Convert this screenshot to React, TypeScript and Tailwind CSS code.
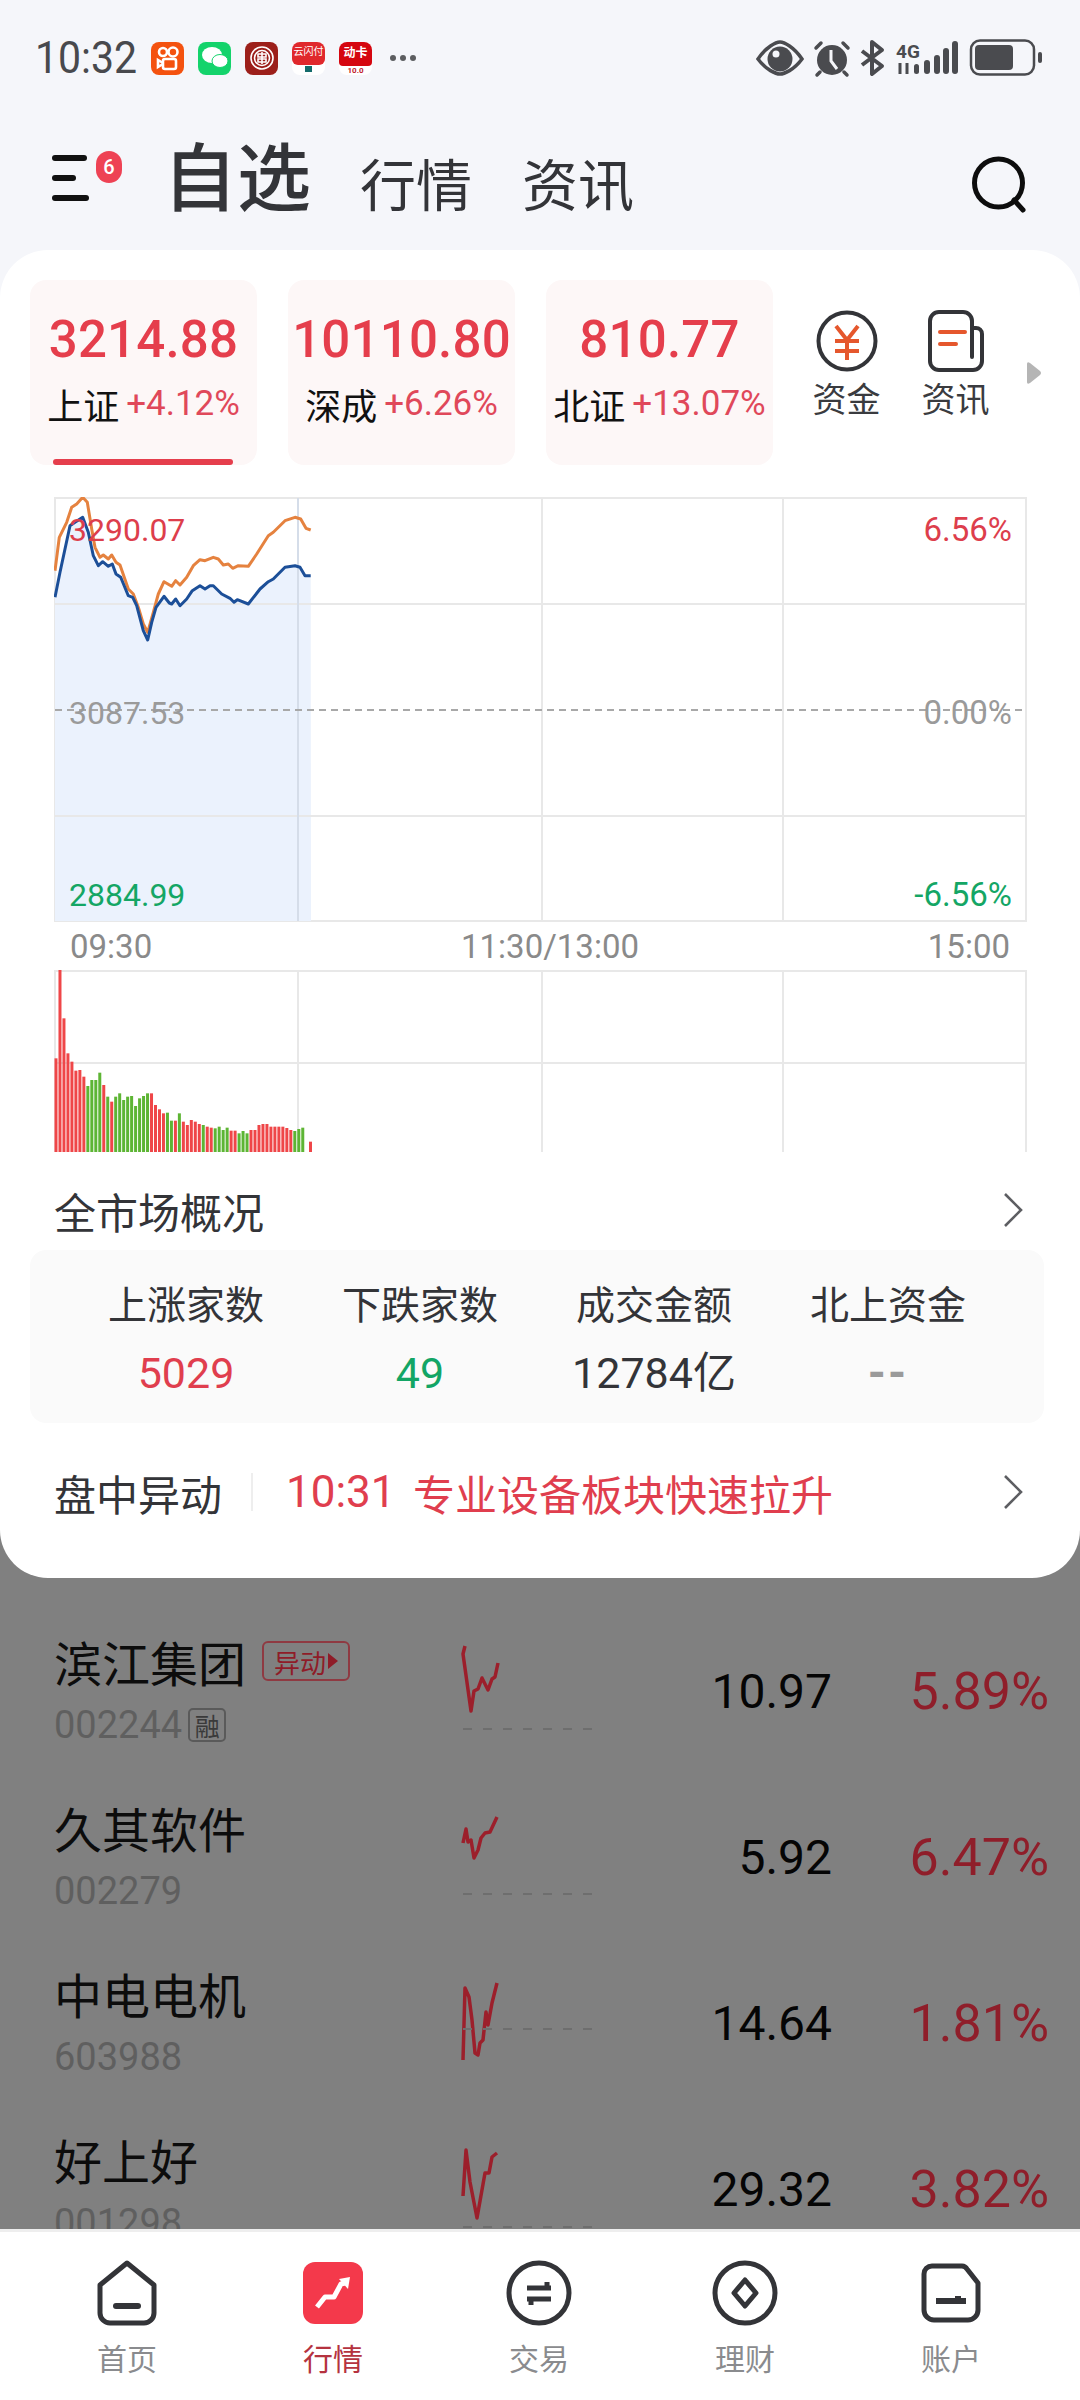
import React from 'react';

const NUM = "font-['Roboto','Noto_Sans_CJK_SC',sans-serif]";

const blue: [number, number][] = [[75,355],[90,280],[120,140],[135,130],[158,115],[175,160],[190,230],[205,260],[218,248],[235,262],[247,255],[258,285],[272,295],[295,350],[308,355],[320,380],[340,455],[353,483],[365,430],[378,385],[402,352],[418,372],[425,375],[437,360],[450,380],[470,360],[487,335],[510,320],[525,330],[540,320],[550,320],[575,345],[600,358],[612,370],[622,362],[655,375],[690,330],[715,308],[730,300],[765,265],[795,260],[810,265],[825,290],[842,290]];
const orange: [number, number][] = [[75,275],[88,175],[110,130],[125,85],[140,75],[158,55],[172,70],[185,150],[195,205],[210,235],[220,228],[235,240],[245,228],[258,250],[270,258],[295,330],[310,345],[325,385],[340,435],[353,460],[370,400],[385,345],[402,308],[425,322],[437,305],[450,318],[470,295],[490,260],[510,242],[525,245],[550,235],[565,240],[580,258],[595,255],[608,268],[625,260],[655,262],[680,225],[715,170],[730,160],[765,125],[795,115],[812,120],[828,148],[842,153]];

const toChart = (p: [number, number][]) =>
  p.map(([x, y]) => `${(x / 3 - 24).toFixed(1)},${(y / 3 - 18).toFixed(1)}`).join(' ');

const bars: [number, string][] = [[325,'r'],[60,'r'],[205,'r'],[310,'r'],[335,'r'],[362,'r'],[360,'r'],[380,'r'],[408,'g'],[390,'g'],[390,'g'],[368,'g'],[405,'r'],[440,'g'],[455,'r'],[440,'g'],[430,'g'],[450,'g'],[440,'g'],[438,'g'],[468,'g'],[445,'g'],[438,'g'],[430,'g'],[430,'r'],[465,'r'],[478,'r'],[490,'r'],[488,'g'],[512,'g'],[512,'r'],[490,'g'],[515,'r'],[525,'r'],[510,'r'],[515,'r'],[522,'r'],[525,'g'],[530,'r'],[533,'r'],[535,'g'],[530,'g'],[540,'g'],[533,'g'],[542,'r'],[542,'r'],[550,'g'],[543,'g'],[550,'g'],[540,'r'],[540,'r'],[525,'r'],[522,'r'],[522,'r'],[530,'r'],[530,'r'],[530,'r'],[530,'r'],[534,'r'],[540,'r'],[543,'g'],[537,'g'],[533,'g'],[575,'r']];

const stocks = [
  { name: '滨江集团', code: '002244', price: '10.97', pct: '5.89%', tag: true, rong: true, dashY: 91, line: '24,8 22,16 30,73 33,53 37,51 41,40 47,52 51,41 54,39 57,25' },
  { name: '久其软件', code: '002279', price: '5.92', pct: '6.47%', tag: false, rong: false, dashY: 90, line: '22,39 25,25 27,38 30,36 33,54 37,46 40,34 44,29 49,28 56,13' },
  { name: '中电电机', code: '603988', price: '14.64', pct: '1.81%', tag: false, rong: false, dashY: 59, line: '22,90 24,18 28,27 31,50 34,83 37,85 39,73 42,70 45,42 47,55 51,33 56,13' },
  { name: '好上好', code: '001298', price: '29.32', pct: '3.82%', tag: false, rong: false, dashY: 91, line: '22,60 25,14 29,46 36,82 44,37 48,37 51,21 56,17' },
];

const Chevron = ({ className }: { className?: string }) => (
  <svg width="22" height="36" viewBox="0 0 22 36" fill="none" stroke="#5d5e62" strokeWidth="2.6" className={className}>
    <path d="M3 2 19 18 3 34" />
  </svg>
);

const Spark = ({ line, dashY }: { line: string; dashY: number }) => (
  <svg width="160" height="100" viewBox="0 0 160 100" className="shrink-0">
    <polyline points={line} fill="none" stroke="#9c1f2b" strokeWidth="3.5" strokeLinejoin="round" />
    <line x1="22" y1={dashY} x2="152" y2={dashY} stroke="#6e6e6e" strokeWidth="2" strokeDasharray="9 11" />
  </svg>
);

const AppDot = ({ className, children }: { className: string; children?: React.ReactNode }) => (
  <div className={`w-[33px] h-[33px] rounded-[8px] flex items-center justify-center overflow-hidden ${className}`}>
    {children}
  </div>
);

const StatusBar = () => (
  <div className="h-[76px] pt-[40px] pl-[35px] pr-[34px] flex items-center justify-between text-[#48494d]">
    <div className="flex items-center">
      <span className={`${NUM} text-[41px] leading-none w-[116px] scale-y-110`}>10:32</span>
      <div className="flex items-center gap-[14px]">
        <AppDot className="bg-[#f4520f]">
          <svg width="24" height="26" viewBox="0 0 24 26" fill="none" stroke="#fff" strokeWidth="2.6">
            <circle cx="7" cy="7" r="4" />
            <circle cx="17" cy="7" r="4.5" />
            <rect x="7" y="14" width="13" height="10" rx="2" />
            <path d="M7 18 2 15v7l5-3" />
          </svg>
        </AppDot>
        <AppDot className="bg-[#14d36b]">
          <svg width="26" height="22" viewBox="0 0 26 22" fill="#fff">
            <ellipse cx="10" cy="8" rx="10" ry="8" />
            <ellipse cx="18" cy="14" rx="8" ry="6.5" stroke="#14d36b" strokeWidth="1" />
          </svg>
        </AppDot>
        <AppDot className="bg-[#9c1f1a]">
          <svg width="26" height="26" viewBox="0 0 26 26" fill="none" stroke="#fff" strokeWidth="1.6">
            <circle cx="13" cy="13" r="11" />
            <circle cx="13" cy="13" r="7.5" />
            <path d="M9 9h8v3H9zM9 14h8v3H9zM13 7v12" />
          </svg>
        </AppDot>
        <AppDot className="bg-white flex-col justify-start">
          <div className="w-full h-[23px] bg-[#e0282c] rounded-b-[6px] text-white text-[10px] leading-[18px] text-center font-['Noto_Sans_CJK_SC',sans-serif]">云闪付</div>
          <div className="w-[7px] h-[6px] mt-[1px] bg-[#136b6b]" />
        </AppDot>
        <AppDot className="bg-white flex-col justify-start">
          <div className="w-full h-[24px] bg-[#d5060f] rounded-b-[4px] text-white text-[12px] leading-[20px] font-bold text-center font-['Noto_Sans_CJK_SC',sans-serif]">动卡</div>
          <div className={`${NUM} text-[#c0202a] text-[8px] leading-[9px] font-bold`}>10.0</div>
        </AppDot>
      </div>
      <div className="flex gap-[4px] ml-[18px]">
        <span className="w-[6px] h-[6px] rounded-full bg-[#5c5d60]" />
        <span className="w-[6px] h-[6px] rounded-full bg-[#5c5d60]" />
        <span className="w-[6px] h-[6px] rounded-full bg-[#5c5d60]" />
      </div>
    </div>
    <svg width="290" height="38" viewBox="0 0 290 38" fill="#4a4b4f" className="overflow-visible">
      {/* eye */}
      <path d="M2 20C10 8 20 3 24 3s14 5 22 17c-8 11-18 15-22 15S10 31 2 20Z" fill="none" stroke="#4a4b4f" strokeWidth="3.5" />
      <circle cx="24" cy="20" r="12.5" />
      <circle cx="20" cy="15" r="3.5" fill="#f5f6fa" />
      {/* alarm */}
      <circle cx="76" cy="21" r="15" />
      <path d="M75 11v11l6 8" fill="none" stroke="#f5f6fa" strokeWidth="3" />
      <path d="M60 9l5-5M92 9l-5-5M64 33l-3 3M88 33l3 3" stroke="#4a4b4f" strokeWidth="3.5" strokeLinecap="round" />
      {/* bluetooth */}
      <path d="M106 12 126 27 116 35V3l10 8-20 15" fill="none" stroke="#4a4b4f" strokeWidth="4" strokeLinejoin="round" />
      {/* 4G and signal */}
      <text x="140" y="19" fontSize="19" fontWeight="700" fontFamily="Roboto, sans-serif">4G</text>
      <path d="M144 24v11M151 24v11" stroke="#4a4b4f" strokeWidth="3" />
      <rect x="158" y="25" width="5" height="10" rx="2.5" />
      <rect x="168" y="21" width="6" height="14" rx="3" />
      <rect x="178" y="16" width="6" height="19" rx="3" />
      <rect x="187" y="9" width="6" height="26" rx="3" />
      <rect x="196" y="2" width="6" height="33" rx="3" />
      {/* battery */}
      <rect x="215" y="1.5" width="63" height="34" rx="9" fill="none" stroke="#4a4b4f" strokeWidth="2.5" />
      <rect x="219" y="6" width="38" height="25" rx="4" />
      <rect x="282" y="13" width="4" height="11" rx="2" />
    </svg>
  </div>
);

const Header = () => (
  <div className="h-[174px] pl-[52px] pr-[52px] pt-[30px] flex items-center justify-between">
    <div className="flex items-center font-['Noto_Sans_CJK_SC',sans-serif] text-[#333438]">
      <div className="relative w-[111px] h-[50px]">
        <div className="flex flex-col justify-between h-[46px] mt-[2px]">
          <div className="w-[35px] h-[6px] rounded-full bg-[#111]" />
          <div className="w-[24px] h-[6px] rounded-full bg-[#111]" />
          <div className="w-[37px] h-[6px] rounded-full bg-[#111]" />
        </div>
        <span className={`${NUM} absolute left-[44px] -top-[2px] w-[26px] h-[32px] rounded-full bg-[#ee4254] text-white text-[20px] leading-[32px] text-center font-medium`}>6</span>
      </div>
      <span className="text-[74px] leading-none font-medium w-[197px] -mt-[10px]">自选</span>
      <span className="text-[56px] leading-none w-[162px] mt-[8px]">行情</span>
      <span className="text-[56px] leading-none mt-[8px]">资讯</span>
    </div>
    <svg width="56" height="58" viewBox="0 0 56 58" fill="none" stroke="#0d0d0d" strokeWidth="5" className="mt-[14px]">
      <circle cx="26.5" cy="27" r="24" />
      <path d="M42 44l9 10" strokeLinecap="round" />
    </svg>
  </div>
);

const IndexCard = ({ value, name, pct, active }: { value: string; name: string; pct: string; active?: boolean }) => (
  <div className="relative w-[227px] h-[185px] rounded-[16px] bg-[#fdf7f7] flex flex-col items-center pt-[30px]">
    <span className={`${NUM} text-[51px] leading-[60px] font-medium text-[#e53e4c] tracking-[0.2px]`}>{value}</span>
    <div className="flex items-center mt-[12px] whitespace-nowrap">
      <span className="font-['Noto_Sans_CJK_SC',sans-serif] text-[36px] leading-[44px] text-[#111]">{name}</span>
      <span className={`${NUM} text-[35px] leading-[44px] ml-[7px] text-[#e0485a]`}>{pct}</span>
    </div>
    {active && <div className="absolute left-[23px] bottom-0 w-[180px] h-[6px] rounded-full bg-[#e53e4c]" />}
  </div>
);

const TopIcon = ({ label, children }: { label: string; children: React.ReactNode }) => (
  <div className="w-[109px] flex flex-col items-center">
    {children}
    <span className="font-['Noto_Sans_CJK_SC',sans-serif] text-[34px] leading-[40px] mt-[6px] text-[#3a3b3f]">{label}</span>
  </div>
);

const Indices = () => (
  <div className="flex items-start pl-[30px] pt-[30px]">
    <div className="flex gap-[31px]">
      <IndexCard value="3214.88" name="上证" pct="+4.12%" active />
      <IndexCard value="10110.80" name="深成" pct="+6.26%" />
      <IndexCard value="810.77" name="北证" pct="+13.07%" />
    </div>
    <div className="flex ml-[19px] pt-[30px]">
      <TopIcon label="资金">
        <svg width="62" height="62" viewBox="0 0 62 62" fill="none">
          <circle cx="31" cy="31" r="28.5" stroke="#333438" strokeWidth="4" />
          <path d="M20 16l11 14 11-14M19 31h24M19 41h24M31 30v20" stroke="#e5572d" strokeWidth="4" />
        </svg>
      </TopIcon>
      <TopIcon label="资讯">
        <svg width="56" height="62" viewBox="0 0 56 62" fill="none">
          <path d="M44 18h4a6 6 0 0 1 6 6v27a9 9 0 0 1-9 9H11a9 9 0 0 1-9-9V11a9 9 0 0 1 9-9h24a9 9 0 0 1 9 9v36" stroke="#333438" strokeWidth="4" strokeLinecap="round" />
          <path d="M12 22h25M12 34h16" stroke="#e5572d" strokeWidth="4" strokeLinecap="round" />
        </svg>
      </TopIcon>
    </div>
    <svg width="16" height="24" viewBox="0 0 16 24" className="ml-[16px] mt-[81px]">
      <path d="M1 3q0-3 3-1l10 8q2 2 0 4L4 22q-3 2-3-1Z" fill="#b5b5b5" />
    </svg>
  </div>
);

const MainChart = () => (
  <div className="relative mx-[54px] mt-[32px] w-[973px] h-[425px]">
    <svg width="973" height="425" viewBox="0 0 973 425" className="block">
      <rect x="1" y="1" width="971" height="423" fill="#fff" stroke="#e8e8e8" strokeWidth="2" />
      <polygon points={`${toChart(blue)} 257,424 1,424`} fill="#ebf2fd" />
      <path d="M244 1v423M488 1v423M729 1v423M1 107h971M1 319h971" stroke="#e8e8e8" strokeWidth="2" fill="none" />
      <path d="M244 1v423" stroke="#d5dde9" strokeWidth="2" fill="none" />
      <line x1="1" y1="213" x2="972" y2="213" stroke="#a8a8a8" strokeWidth="2" strokeDasharray="7 5" />
      <polyline points={toChart(orange)} fill="none" stroke="#e5823f" strokeWidth="3" strokeLinejoin="round" />
      <polyline points={toChart(blue)} fill="none" stroke="#1c4f98" strokeWidth="3" strokeLinejoin="round" />
    </svg>
    <span className={`${NUM} absolute left-[15px] top-[13px] text-[32px] leading-[40px] text-[#dd3e4c]`}>3290.07</span>
    <span className={`${NUM} absolute right-[15px] top-[13px] text-[33px] leading-[40px] text-[#dd3e4c]`}>6.56%</span>
    <span className={`${NUM} absolute left-[15px] top-[196px] text-[32px] leading-[40px] text-[#9a9a9a]`}>3087.53</span>
    <span className={`${NUM} absolute right-[15px] top-[196px] text-[33px] leading-[40px] text-[#9a9a9a]`}>0.00%</span>
    <span className={`${NUM} absolute left-[15px] bottom-[7px] text-[32px] leading-[40px] text-[#14a665]`}>2884.99</span>
    <span className={`${NUM} absolute right-[15px] bottom-[7px] text-[33px] leading-[40px] text-[#14a665]`}>-6.56%</span>
  </div>
);

const TimeAxis = () => (
  <div className={`${NUM} mx-[54px] px-[16px] pt-[2px] h-[48px] flex items-center justify-between text-[33px] text-[#8a8a8a]`}>
    <span>09:30</span>
    <span className="ml-[20px]">11:30/13:00</span>
    <span>15:00</span>
  </div>
);

const VolumeChart = () => (
  <svg width="973" height="182" viewBox="0 0 973 182" className="block ml-[54px]">
    <path d="M1 182V1h971v181M244 1v181M488 1v181M729 1v181M1 93h971" stroke="#e8e8e8" strokeWidth="2" fill="none" />
    {bars.map(([top, c], i) => {
      const x = i === bars.length - 1 ? 255 : 0.5 + i * 3.98;
      const y = top / 3 - 20;
      return <rect key={i} x={x} y={y} width="3" height={182 - y} fill={c === 'r' ? '#ef4648' : '#5db534'} />;
    })}
  </svg>
);

const Overview = () => {
  const cells = [
    { label: '上涨家数', value: '5029', color: 'text-[#e03e4e]' },
    { label: '下跌家数', value: '49', color: 'text-[#12a565]' },
    { label: '成交金额', value: '12784亿', color: 'text-[#333438]' },
  ];
  return (
    <div className="font-['Noto_Sans_CJK_SC',sans-serif]">
      <div className="h-[98px] pt-[18px] pl-[54px] pr-[56px] flex items-center justify-between">
        <span className="text-[42px] text-[#333438]">全市场概况</span>
        <Chevron />
      </div>
      <div className="ml-[30px] mr-[36px] h-[173px] rounded-[16px] bg-[#fafafa] grid grid-cols-4 px-[39px] pt-[26px]">
        {cells.map((c) => (
          <div key={c.label} className="flex flex-col items-center">
            <span className="text-[39px] leading-[52px] text-[#333438]">{c.label}</span>
            <span className={`${NUM} text-[43px] leading-[52px] mt-[19px] ${c.color}`}>{c.value}</span>
          </div>
        ))}
        <div className="flex flex-col items-center">
          <span className="text-[39px] leading-[52px] text-[#333438]">北上资金</span>
          <span className={`${NUM} text-[46px] leading-[52px] mt-[19px] font-bold tracking-[2px] text-[#9a9a9a]`}>--</span>
        </div>
      </div>
      <div className="h-[138px] pl-[54px] pr-[56px] flex items-center">
        <span className="text-[42px] text-[#333438] w-[197px]">盘中异动</span>
        <div className="w-[2px] h-[38px] bg-[#eeeeee]" />
        <span className={`${NUM} text-[44px] text-[#e03e4e] ml-[33px] w-[127px]`}>10:31</span>
        <span className="text-[42px] text-[#e03e4e]">专业设备板块快速拉升</span>
        <Chevron className="ml-auto" />
      </div>
    </div>
  );
};

const StockRow = ({ s }: { s: (typeof stocks)[number] }) => (
  <div className="h-[166px] shrink-0 flex pl-[54px] pr-[31px] pt-[30px]">
    <div className="w-[387px] shrink-0 font-['Noto_Sans_CJK_SC',sans-serif] -mt-[8px]">
      <div className="flex items-center h-[62px]">
        <span className="text-[48px] leading-none text-[#0c0c0c]">{s.name}</span>
        {s.tag && (
          <span className="ml-[16px] h-[40px] w-[88px] rounded-[6px] border-2 border-[#8f3a42] flex items-center justify-center text-[26px] text-[#8f1c28]">
            异动<span className="ml-[2px] w-0 h-0 border-y-[8px] border-y-transparent border-l-[10px] border-l-[#8f1c28]" />
          </span>
        )}
      </div>
      <div className="flex items-center mt-[10px] h-[46px]">
        <span className={`${NUM} text-[38px] leading-none text-[#5f5f5f]`}>{s.code}</span>
        {s.rong && <span className="ml-[6px] w-[38px] h-[34px] rounded-[5px] border-2 border-[#5a5a5a] flex items-center justify-center text-[25px] leading-none text-[#3a3a3a]">融</span>}
      </div>
    </div>
    <Spark line={s.line} dashY={s.dashY} />
    <span className={`${NUM} ml-auto mt-[24px] text-[48px] leading-[60px] text-[#050505]`}>{s.price}</span>
    <span className={`${NUM} w-[217px] text-right mt-[24px] text-[52px] leading-[60px] text-[#8f1e2a]`}>{s.pct}</span>
  </div>
);

const NavItem = ({ label, active, children }: { label: string; active?: boolean; children: React.ReactNode }) => (
  <div className="w-[206px] flex flex-col items-center">
    <div className="h-[68px] flex items-center justify-center">{children}</div>
    <span className={`text-[30px] leading-[36px] mt-[12px] ${active ? 'text-[#b5333f]' : 'text-[#8a8b8e]'}`}>{label}</span>
  </div>
);

const BottomNav = () => (
  <div className="h-[171px] shrink-0 bg-white border-t-[3px] border-[#eeeeee] pt-[27px] px-[24px] flex font-['Noto_Sans_CJK_SC',sans-serif]">
    <NavItem label="首页">
      <svg width="62" height="66" viewBox="0 0 62 66" fill="none" stroke="#333438" strokeWidth="5" strokeLinejoin="round">
        <path d="M31 3 58 25v28a10 10 0 0 1-10 10H14A10 10 0 0 1 4 53V25Z" />
        <path d="M20 46h22" strokeWidth="6" strokeLinecap="round" />
      </svg>
    </NavItem>
    <NavItem label="行情" active>
      <svg width="60" height="62" viewBox="0 0 60 62">
        <rect width="60" height="62" rx="12" fill="#f4394b" />
        <path d="M14 45 22 35 31 35 38 22 42 21" fill="none" stroke="#fff" strokeWidth="5" strokeLinejoin="round" />
        <path d="M36 17 47 15 45 27Z" fill="#fff" />
      </svg>
    </NavItem>
    <NavItem label="交易">
      <svg width="66" height="66" viewBox="0 0 66 66" fill="none" stroke="#333438">
        <circle cx="33" cy="33" r="30" strokeWidth="5" />
        <path d="M21 28h24M41 22v6M21 39h24M25 39v6" strokeWidth="5" />
      </svg>
    </NavItem>
    <NavItem label="理财">
      <svg width="66" height="66" viewBox="0 0 66 66" fill="none" stroke="#333438">
        <circle cx="33" cy="33" r="30" strokeWidth="5" />
        <path d="M33 20 44 33 33 46 22 33Z" strokeWidth="5" strokeLinejoin="round" />
      </svg>
    </NavItem>
    <NavItem label="账户">
      <svg width="62" height="60" viewBox="0 0 62 60" fill="none" stroke="#333438" strokeWidth="5" strokeLinejoin="round">
        <path d="M12 3h30a6 6 0 0 1 5 3l11 14v27a10 10 0 0 1-10 10H14A10 10 0 0 1 4 47V11a8 8 0 0 1 8-8Z" />
        <path d="M16 38h30M38 33v5" strokeWidth="6" />
      </svg>
    </NavItem>
  </div>
);

export default function App() {
  return (
    <div className="w-[1080px] h-[2400px] flex flex-col overflow-hidden bg-[#f5f6fa]">
      <StatusBar />
      <Header />
      <div className="relative z-10 h-[1328px] shrink-0 bg-white rounded-[48px]">
        <Indices />
        <MainChart />
        <TimeAxis />
        <VolumeChart />
        <Overview />
      </div>
      <div className="flex-1 min-h-0 -mt-[48px] pt-[78px] bg-[#808080] overflow-hidden flex flex-col">
        {stocks.map((s) => (
          <StockRow key={s.code} s={s} />
        ))}
      </div>
      <BottomNav />
    </div>
  );
}
